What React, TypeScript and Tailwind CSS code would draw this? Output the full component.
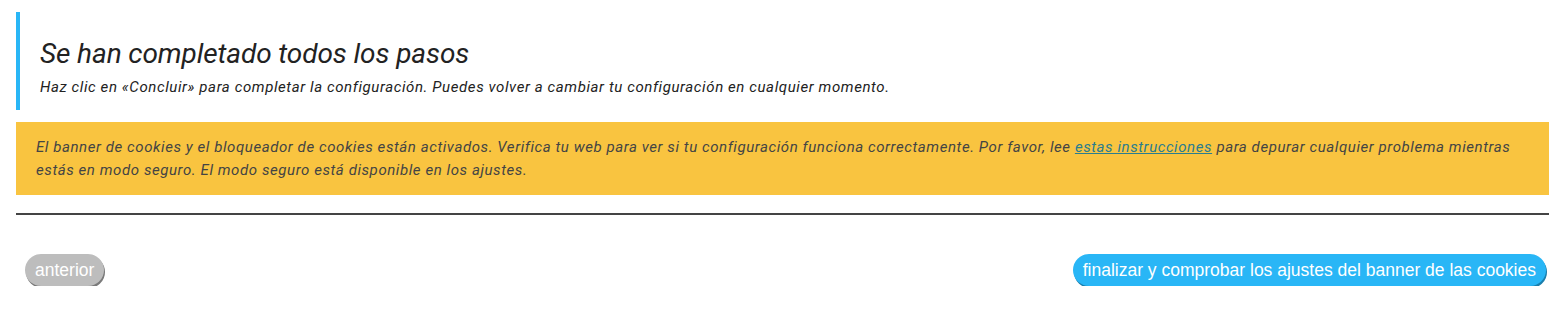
export default function App() {
  return (
    <div className="w-full bg-white pl-4 pr-[14px] pt-3 font-['Roboto',sans-serif]">
      {/* Completed steps header */}
      <div className="border-l-4 border-[#29b6f6] pl-5 pt-[25px] pb-[13px]">
        <h2 className="text-[28px] leading-[34px] italic font-normal tracking-[-0.1px] text-[#222]">
          Se han completado todos los pasos
        </h2>
        <p className="mt-[6px] text-[15px] leading-5 italic tracking-[0.6px] text-[#222]">
          Haz clic en «Concluir» para completar la configuración. Puedes volver a cambiar tu configuración en cualquier momento.
        </p>
      </div>

      {/* Notice */}
      <div className="mt-3 bg-[#f9c440] pl-5 pr-5 pt-[14px] pb-[13px] text-[15px] leading-[23px] italic tracking-[0.58px] text-[#444]">
        El banner de cookies y el bloqueador de cookies están activados. Verifica tu web para ver si tu configuración funciona correctamente. Por favor, lee{' '}
        <a href="#" className="underline text-[#2a7d8f]">estas instrucciones</a>{' '}
        para depurar cualquier problema mientras estás en modo seguro. El modo seguro está disponible en los ajustes.
      </div>

      <hr className="mt-[18px] border-0 h-[2px] bg-[#444]" />

      {/* Navigation */}
      <div className="mt-[39px] flex items-start justify-between pl-[9px] pr-[3px] font-['Liberation_Sans',Arial,sans-serif]">
        <button className="h-8 px-[10px] rounded-full bg-[#bdbdbd] text-white text-[17.5px] shadow-[1px_2px_0_#7a7a7a]">
          anterior
        </button>
        <button className="h-8 px-[10px] rounded-full bg-[#29b6f6] text-white text-[17.5px] shadow-[1px_2px_0_#1b7fad]">
          finalizar y comprobar los ajustes del banner de las cookies
        </button>
      </div>
    </div>
  );
}
